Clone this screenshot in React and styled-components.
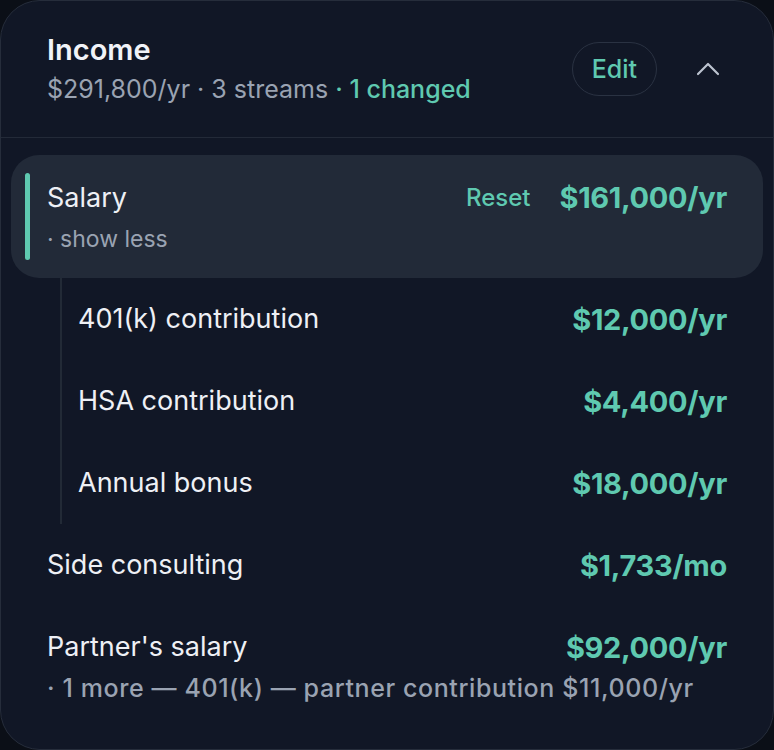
import styled, { createGlobalStyle, css } from "styled-components";

const GlobalStyle = createGlobalStyle`
    html, body {
        margin: 0;
        padding: 0;
        background: #0b0f17;
    }
    body {
        font-family: Inter, "Noto Sans", sans-serif;
        -webkit-font-smoothing: antialiased;
    }
    * {
        box-sizing: border-box;
    }
`;

const Card = styled.section`
    width: 774px;
    height: 750px;
    background: #111726;
    border: 1px solid #262d3b;
    border-radius: 40px;
    overflow: hidden;
    color: #eef0f5;
`;
const Header = styled.header`
    display: flex;
    align-items: center;
    justify-content: space-between;
    padding: 32px 45px 33px 46px;
    border-bottom: 1px solid #232a38;
`;
const HeaderText = styled.div`
    display: flex;
    flex-direction: column;
    row-gap: 7px;
`;
const Title = styled.h2`
    margin: 0;
    font-size: 29px;
    line-height: 34px;
    font-weight: 600;
    color: #f1f3f8;
`;
const Summary = styled.div`
    font-size: 25px;
    line-height: 30px;
    color: #9aa3b2;
`;
const Changed = styled.span`
    color: #5fc9b0;
    font-weight: 500;
`;
const HeaderActions = styled.div`
    display: flex;
    align-items: center;
    column-gap: 31px;
`;
const EditButton = styled.button`
    height: 54px;
    padding: 0 19px;
    border: 1px solid #2a3242;
    border-radius: 100rem;
    background: transparent;
    color: #5fc9b0;
    font-family: inherit;
    font-size: 25px;
    font-weight: 500;
`;
const IconButton = styled.button`
    display: flex;
    align-items: center;
    justify-content: center;
    width: 40px;
    height: 40px;
    padding: 0;
    border: none;
    background: transparent;
    color: #bcc3cf;
`;
const List = styled.div`
    padding: 17px 10px 0;
`;
const Row = styled.div`
    display: flex;
    flex-direction: column;
    justify-content: center;
    min-height: 82px;
    padding: 0 36px;
    ${(props) => props.active && css`
        position: relative;
        min-height: 123px;
        padding: 26px 36px 25px;
        background: #222a38;
        border-radius: 28px;
    `};
    ${(props) => props.nested && css`
        padding: 0 36px 0 16px;
    `};
    ${(props) => props.withNote && css`
        justify-content: flex-start;
        padding: 25px 36px 0;
    `};
`;
const AccentBar = styled.span`
    position: absolute;
    left: 14px;
    top: 18px;
    bottom: 18px;
    width: 5px;
    border-radius: 3px;
    background: #5fc9b0;
`;
const RowMain = styled.div`
    display: flex;
    align-items: center;
    justify-content: space-between;
    height: 32px;
`;
const Label = styled.span`
    font-size: 27px;
    line-height: 32px;
    color: #eef0f5;
`;
const RowEnd = styled.div`
    display: flex;
    align-items: center;
    column-gap: 29px;
`;
const ResetLink = styled.span`
    font-size: 24px;
    font-weight: 500;
    color: #5fc9b0;
`;
const Amount = styled.span`
    font-size: 29px;
    font-weight: 700;
    color: #5fc9b0;
    letter-spacing: -0.3px;
`;
const Note = styled.div`
    margin-top: 11px;
    font-size: 23px;
    line-height: 28px;
    color: #9aa3b2;
    ${(props) => props.strong && css`
        font-size: 25px;
        font-weight: 500;
        letter-spacing: 0.6px;
    `};
`;
const Children = styled.div`
    margin-left: 49px;
    border-left: 2px solid #222a36;
`;

const nested = [
    { label: "401(k) contribution", amount: "$12,000/yr" },
    { label: "HSA contribution", amount: "$4,400/yr" },
    { label: "Annual bonus", amount: "$18,000/yr" },
];

const App = () => {
    return (<>
        <GlobalStyle />
        <Card>
            <Header>
                <HeaderText>
                    <Title>Income</Title>
                    <Summary>$291,800/yr · 3 streams <Changed>· 1 changed</Changed></Summary>
                </HeaderText>
                <HeaderActions>
                    <EditButton>Edit</EditButton>
                    <IconButton aria-label="Collapse">
                        <svg width="24" height="24" viewBox="0 0 24 24" fill="none" stroke="currentColor" strokeWidth="2.2" strokeLinecap="round" strokeLinejoin="round">
                            <path d="M2 17 L12 7 L22 17" />
                        </svg>
                    </IconButton>
                </HeaderActions>
            </Header>
            <List>
                <Row active>
                    <AccentBar />
                    <RowMain>
                        <Label>Salary</Label>
                        <RowEnd>
                            <ResetLink>Reset</ResetLink>
                            <Amount>$161,000/yr</Amount>
                        </RowEnd>
                    </RowMain>
                    <Note>· show less</Note>
                </Row>
                <Children>
                    {nested.map((item) => (
                        <Row nested key={item.label}>
                            <RowMain>
                                <Label>{item.label}</Label>
                                <Amount>{item.amount}</Amount>
                            </RowMain>
                        </Row>
                    ))}
                </Children>
                <Row>
                    <RowMain>
                        <Label>Side consulting</Label>
                        <Amount>$1,733/mo</Amount>
                    </RowMain>
                </Row>
                <Row withNote>
                    <RowMain>
                        <Label>Partner's salary</Label>
                        <Amount>$92,000/yr</Amount>
                    </RowMain>
                    <Note strong>· 1 more — 401(k) — partner contribution $11,000/yr</Note>
                </Row>
            </List>
        </Card>
    </>);
};

export default App;
